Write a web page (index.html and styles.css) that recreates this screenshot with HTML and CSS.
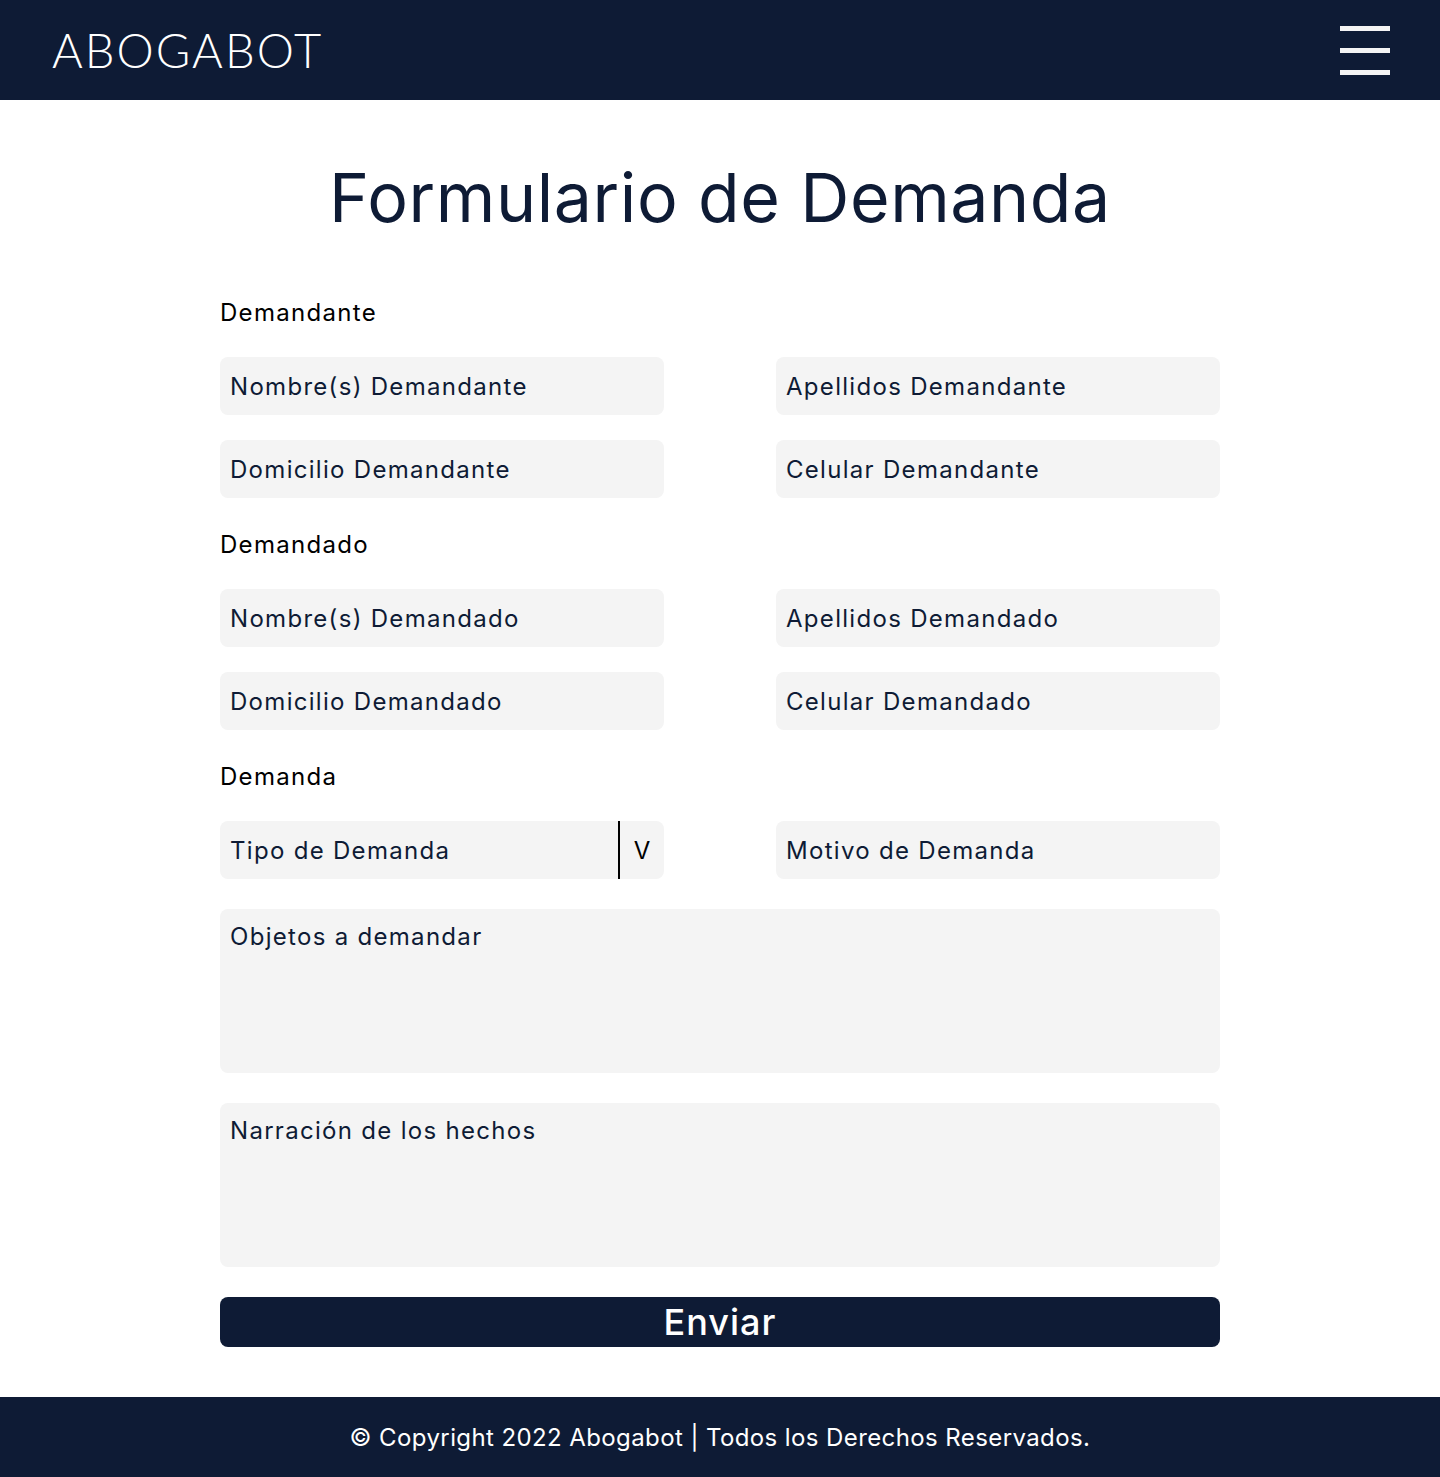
FILE: index.html
```html
<!DOCTYPE html>
<html lang="es">
<head>
<meta charset="utf-8">
<title>Abogabot - Formulario de Demanda</title>
<link rel="stylesheet" href="styles.css">
</head>
<body>
<header class="topbar">
  <div class="logo">ABOGABOT</div>
  <div class="burger"><span></span><span></span><span></span></div>
</header>
<main class="main">
  <h1 class="title">Formulario de Demanda</h1>
  <form class="form">
    <div class="section-label">Demandante</div>
    <div class="grid">
      <div class="field">Nombre(s) Demandante</div>
      <div class="field">Apellidos Demandante</div>
      <div class="field">Domicilio Demandante</div>
      <div class="field">Celular Demandante</div>
    </div>
    <div class="section-label">Demandado</div>
    <div class="grid">
      <div class="field">Nombre(s) Demandado</div>
      <div class="field">Apellidos Demandado</div>
      <div class="field">Domicilio Demandado</div>
      <div class="field">Celular Demandado</div>
    </div>
    <div class="section-label">Demanda</div>
    <div class="grid grid-last">
      <div class="field select"><span class="select-text">Tipo de Demanda</span><span class="select-arrow">V</span></div>
      <div class="field">Motivo de Demanda</div>
    </div>
    <div class="area">Objetos a demandar</div>
    <div class="area">Narración de los hechos</div>
    <div class="submit">Enviar</div>
  </form>
</main>
<footer class="footer">© Copyright 2022 Abogabot | Todos los Derechos Reservados.</footer>
</body>
</html>
```

FILE: styles.css
```css
* { box-sizing: border-box; }
body {
  margin: 0;
  font-family: "Inter", "Open Sans", sans-serif;
  color: #0e1b35;
  background: #fff;
}
.topbar {
  height: 100px;
  background: #0e1b35;
  display: flex;
  align-items: center;
  justify-content: space-between;
  padding: 0 50px 0 52px;
}
.logo {
  font-family: "Lato", sans-serif;
  font-weight: 300;
  font-size: 47px;
  color: #fff;
  letter-spacing: 2px;
}
.burger {
  width: 50px;
  display: flex;
  flex-direction: column;
  gap: 17px;
}
.burger span {
  display: block;
  height: 5px;
  background: #f4f4f4;
}
.main {
  padding: 59px 0 50px;
}
.title {
  margin: 0;
  text-align: center;
  font-weight: 400;
  font-size: 68px;
  line-height: 76px;
  letter-spacing: 0.6px;
  color: #0e1b35;
}
.form {
  width: 1000px;
  margin: 63px auto 0;
  display: flex;
  flex-direction: column;
}
.section-label {
  font-size: 24px;
  line-height: 30px;
  letter-spacing: 1.3px;
  color: #000;
  margin: 0 0 29px;
}
.grid {
  display: grid;
  grid-template-columns: 444px 444px;
  justify-content: space-between;
  row-gap: 25px;
  margin-bottom: 32px;
}
.grid-last { margin-bottom: 30px; }
.field {
  height: 58px;
  background: #f4f4f4;
  border-radius: 8px;
  padding: 0 10px;
  display: flex;
  align-items: center;
  font-size: 24px;
  letter-spacing: 1.3px;
  color: #0e1b35;
}
.select {
  padding-right: 0;
}
.select-text { flex: 1; }
.select-arrow {
  width: 46px;
  height: 100%;
  border-left: 2px solid #000;
  display: flex;
  align-items: center;
  justify-content: center;
  color: #000;
  letter-spacing: 0;
}
.area {
  height: 164px;
  background: #f4f4f4;
  border-radius: 8px;
  padding: 13px 10px;
  font-size: 24px;
  letter-spacing: 1.3px;
  color: #0e1b35;
  margin-bottom: 30px;
}
.submit {
  height: 50px;
  background: #0e1b35;
  border-radius: 8px;
  color: #fff;
  font-size: 36px;
  font-weight: 500;
  letter-spacing: 1px;
  display: flex;
  align-items: center;
  justify-content: center;
}
.footer {
  height: 80px;
  background: #0e1b35;
  color: #fff;
  font-size: 24px;
  letter-spacing: 0.4px;
  display: flex;
  align-items: center;
  justify-content: center;
}
```
